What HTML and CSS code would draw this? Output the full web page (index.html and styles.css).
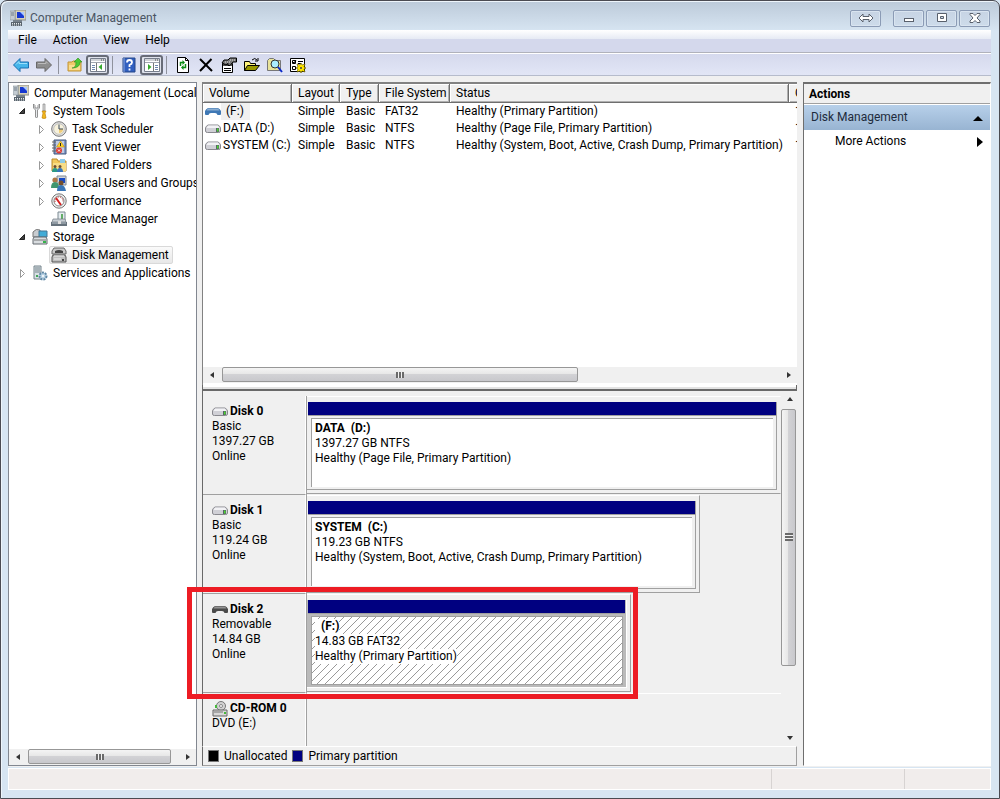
FILE: index.html
```html
<!DOCTYPE html>
<html lang="en">
<head>
  <meta charset="UTF-8">
  <meta name="viewport" content="width=device-width, initial-scale=1.0">
  <title>Computer Management</title>
  <link rel="stylesheet" href="styles.css">
</head>
<body>
  <!-- shared icons -->
  <svg class="sprite" aria-hidden="true">
    <symbol id="computer" viewBox="0 0 16 16">
      <path d="M5 0h11v10H5z" fill="#d5d1bd" stroke="#8d8d86"/>
      <path d="M7 2h7v6H7z" fill="#1738d0"/><path d="M10 2h4v4z" fill="#a9c8ff"/>
      <path d="M0 1h5v9H0z" fill="#c4ccd2" stroke="#8b949b" stroke-width=".6"/><path d="M1 3h3M1 5h3" stroke="#6e7b86"/>
      <path d="M3 10h9v2H3z" fill="#77828c"/><path d="M1 12h11v4H1z" fill="#59646d"/>
      <path d="M2 13.5h9M2 15h9" stroke="#e6eaed" stroke-dasharray="1 1"/>
    </symbol>
    <symbol id="tools" viewBox="0 0 16 16">
      <path d="M1.500 1v4l2 2v7q1 2 2 0V7l2-2V1L6 2.500V5H3V2.500z" fill="#e8ebee" stroke="#777" stroke-width=".8"/>
      <path d="M11 1h2v7h-2z" fill="#ddd" stroke="#777" stroke-width=".6"/>
      <path d="M10 8h4l-1 2 1 5q-2 1-4 0l1-5z" fill="#f2b71d" stroke="#b97900" stroke-width=".6"/>
    </symbol>
    <symbol id="clock" viewBox="0 0 16 16">
      <circle cx="8" cy="8" r="7.300" fill="#e1e1e1" stroke="#777"/><circle cx="8" cy="8" r="5.300" fill="#f7f2dc" stroke="#aaa" stroke-width=".6"/>
      <path d="M8 8h4a4 4 0 0 1-4 4z" fill="#f0ce7c"/><path d="M8 3.500V8h4" fill="none" stroke="#39485b"/>
    </symbol>
    <symbol id="event" viewBox="0 0 16 16">
      <path d="M3 1h12v14H3z" fill="#8098c5" stroke="#44587f"/><path d="M5 2h8v12H5z" fill="#bfcbe3"/>
      <path d="M1 3h4M1 6h4M1 9h4M1 12h4" stroke="#666"/>
      <path d="M9.500 2l4 6h-8z" fill="#ffd52d" stroke="#b78300" stroke-width=".5"/><path d="M9.500 4v3" stroke="#222"/>
      <circle cx="8" cy="11.500" r="3" fill="#df3c34"/><path d="M7 10.500l2 2m0-2l-2 2" stroke="#fff"/>
    </symbol>
    <symbol id="shared" viewBox="0 0 16 16">
      <path d="M1 5V2h5l1 2h8v10H1z" fill="#f2c95c" stroke="#b98a2c"/><path d="M9 2h5v4H9z" fill="#8fcbe7"/><path d="M2 6h13v8H2z" fill="#f8dd86"/>
      <circle cx="4" cy="9.500" r="1.500" fill="#6d4d32"/><circle cx="9" cy="9.500" r="1.500" fill="#6d4d32"/>
      <path d="M1 15q0-4 3-4t3 4z" fill="#2c9a86"/><path d="M6 15q0-4 3-4t3 4z" fill="#3876bb"/>
    </symbol>
    <symbol id="users" viewBox="0 0 16 16">
      <path d="M6 1h9v9H6z" fill="#d2d6dc" stroke="#818992"/><path d="M8 3h6v5H8z" fill="#174ac5"/>
      <circle cx="4" cy="5" r="2.600" fill="#ad7847"/><path d="M0 13q0-6 4-6t4 6z" fill="#40966f"/>
      <circle cx="10" cy="8" r="2.500" fill="#75502e"/><path d="M6 16q0-6 4-6t5 6z" fill="#3976b7"/>
    </symbol>
    <symbol id="gauge" viewBox="0 0 16 16">
      <circle cx="8" cy="8" r="7.200" fill="#eee" stroke="#777"/><circle cx="8" cy="8" r="5" fill="#fff" stroke="#888"/>
      <path d="M5 5l5 7" stroke="#d52020" stroke-width="2"/><path d="M4 9q0-5 4-5t4 5" fill="none" stroke="#b33" stroke-dasharray="1 1"/>
    </symbol>
    <symbol id="device" viewBox="0 0 16 16">
      <path d="M7 1h7v8H7z" fill="#e4ebef" stroke="#7d8a92"/><path d="M10 3h2v5h-2z" fill="#62ad67"/>
      <path d="M2 8h12l1 3H1z" fill="#c6cdd3" stroke="#737c84" stroke-width=".7"/><path d="M0 11h16v4H0z" fill="#66727c"/><path d="M1 12h14" stroke="#b8c2ca"/><path d="M7 10h3v3H7z" fill="#ddd"/>
    </symbol>
    <symbol id="storage" viewBox="0 0 16 16">
      <path d="M1 3q3-4 7-2v7H1z" fill="#c8ccd0" stroke="#777"/><path d="M7 2h8v6H7z" fill="#42acd7" stroke="#427796"/>
      <path d="M2 8h12l1 2v5H1v-5z" fill="#d9dde0" stroke="#656b70"/><path d="M2 11h12" stroke="#777"/><path d="M11 12h3v2h-3z" fill="#36b34b"/>
    </symbol>
    <symbol id="diskmgmt" viewBox="0 0 16 16">
      <path d="M3 1h10l2 3v3H1V4z" fill="#c9c9c9" stroke="#666"/><path d="M4 4q4-2 8 0v2H4z" fill="#444"/>
      <path d="M2 8h12l1 2v5H1v-5z" fill="#bfbfbf" stroke="#555"/><path d="M3 9h10M3 12h7" stroke="#eee"/><path d="M11 12h2v2h-2z" fill="#444"/>
    </symbol>
    <symbol id="services" viewBox="0 0 16 16">
      <path d="M2 1h7v13H2z" fill="#d9e1e5" stroke="#75838b"/><path d="M3 3h5M3 5h5M3 7h5" stroke="#75838b"/><path d="M4 10h2v2H4z" fill="#41a657"/>
      <circle cx="11" cy="11" r="3.500" fill="#b9d2e4" stroke="#6088a5" stroke-width="2" stroke-dasharray="2 1"/><circle cx="11" cy="11" r="1" fill="#fff"/>
    </symbol>
    <symbol id="drive" viewBox="0 0 16 10">
      <path d="M3 1h10q2 1 2.500 3v3q0 1.500-2 1.500h-11q-2 0-2-1.500V4Q1 2 3 1z" fill="#d0d0d6" stroke="#88888e"/><path d="M3 1.500h10l1.500 2.500h-13z" fill="#f2f2f5"/>
      <path d="M11 4h3v4h-3z" fill="#59636a"/><path d="M12 4.500h1.500v3H12z" fill="#4bd82d"/>
    </symbol>
    <symbol id="stick" viewBox="0 0 16 10">
      <path d="M3 1h10q2 1 3 3v3q0 1-1 1h-2.500Q12 6 10 6H6Q4 6 3.500 8H1Q0 8 0 7V4Q1 2 3 1z" fill="currentColor"/><path d="M3 1.500h10l1.500 2h-13z" fill="#fff" fill-opacity=".4"/>
    </symbol>
    <symbol id="open" viewBox="0 0 16 16"><path d="M5.500 10.500h5v-5z" fill="#404040" stroke="#222"/></symbol>
    <symbol id="closed" viewBox="0 0 16 16"><path d="M6.500 4.500v8l4-4z" fill="#fff" stroke="#999"/></symbol>
    <symbol id="arrow" viewBox="0 0 8 8"><path d="M2 1v6l4-3z" fill="#333"/></symbol>
  </svg>

  <div class="window">
    <header class="titlebar">
      <svg class="icon"><use href="#computer"/></svg>
      <h1>Computer Management</h1>
      <div class="caption">
        <button class="span" aria-label="Span displays"><svg width="16" height="10"><path d="M1 5l4-4v2.500h6V1l4 4-4 4V6.500H5V9z" fill="#fff" stroke="#59606c"/></svg></button>
        <button aria-label="Minimize"><svg width="12" height="12"><rect x="1.500" y="6.500" width="9" height="3" fill="#fff" stroke="#59606c"/></svg></button>
        <button aria-label="Maximize"><svg width="12" height="12"><path d="M1.500 1.500h9v8h-9zM4.500 4.500v2h3v-2z" fill="#fff" fill-rule="evenodd" stroke="#59606c"/></svg></button>
        <button aria-label="Close"><svg width="12" height="12"><path d="M1 1.500h3l2 2 2-2h3v1L8 6l3 3v1.500H8l-2-2-2 2H1V9l3-3-3-3.500z" fill="#fff" stroke="#59606c"/></svg></button>
      </div>
    </header>

    <nav class="menubar">
      <button>File</button><button>Action</button><button>View</button><button>Help</button>
    </nav>

    <div class="toolbar">
      <button aria-label="Back"><svg class="icon"><path d="M0.500 8L7 1.500V5h8.500v6H7v3.500z" fill="#45b5ea" stroke="#1b6fb0"/><path d="M3 7.500L6 4.500V6.500h8" fill="none" stroke="#9be0fb"/></svg></button>
      <button aria-label="Forward"><svg class="icon"><path d="M15.500 8L9 1.500V5H.500v6H9v3.500z" fill="#8e8e8e" stroke="#686868"/><path d="M2 6.500h8V4.500l2 2" fill="none" stroke="#bbb"/></svg></button>
      <span class="sep"></span>
      <button aria-label="Up one level"><svg class="icon"><path d="M1 14V5h4l1-1h8v10z" fill="#efc96b" stroke="#c29437"/><path d="M2 8h11v5H2z" fill="#f9dd91"/><path d="M5 11q4 0 4-6H7l4-4 4 4h-2q0 6-8 6z" fill="#4cc834" stroke="#2b8d1f" stroke-width=".6"/></svg></button>
      <button class="pressed" aria-label="Show console tree"><svg class="icon"><path d="M.500 1.500h15v13H.500z" fill="#fff" stroke="#777e8c"/><path d="M1 3h14M1 5.500h14" stroke="#a1a6b0"/><path d="M11 3h3" stroke="#444" stroke-dasharray="1 1"/><path d="M6.500 6v8" stroke="#777"/><path d="M2 8.500h3M2 10.500h3M2 12.500h3" stroke="#6e87ae"/><path d="M12 7v6L8.500 10z" fill="#37a92d"/></svg></button>
      <span class="sep"></span>
      <button aria-label="Help"><svg class="icon"><path d="M2 1h12v14H2z" fill="#315fc0" stroke="#264989"/><path d="M3 1v14" stroke="#8fa9dc"/><path d="M6 5.500q0-2.500 2.500-2.500T11 5.500Q11 7 8.500 8v2M8.500 11.500v2" fill="none" stroke="#fff" stroke-width="1.800"/></svg></button>
      <button class="pressed" aria-label="Show action pane"><svg class="icon"><path d="M.500 1.500h15v13H.500z" fill="#fff" stroke="#777e8c"/><path d="M1 3h14M1 5.500h14" stroke="#a1a6b0"/><path d="M11 3h3" stroke="#444" stroke-dasharray="1 1"/><path d="M9.500 6v8" stroke="#777"/><path d="M11 8.500h3M11 10.500h3M11 12.500h3" stroke="#6e87ae"/><path d="M4 7v6l3.500-3z" fill="#37a92d"/></svg></button>
      <span class="sep"></span>
      <button aria-label="Refresh"><svg class="icon"><path d="M2.500.500h8l3 3v12h-11z" fill="#fff" stroke="#000"/><path d="M10.500.500v3h3" fill="none" stroke="#000"/><path d="M5.500 9V5.500H8M10.500 7v3.500H8" fill="none" stroke="#0a8a14" stroke-width="1.500"/><path d="M7.500 3v5L10 5.500zM8.500 8v5L6 10.500z" fill="#0a8a14"/></svg></button>
      <button aria-label="Delete"><svg class="icon"><path d="M2 2l12 12M13.500 2L2 14" stroke="#000" stroke-width="2"/></svg></button>
      <button aria-label="Properties"><svg class="icon"><path d="M1.500 6.500h10v9h-10z" fill="#fff" stroke="#000"/><path d="M2 8h9" stroke="#555" stroke-width="2"/><path d="M3 11.500h7M3 13.500h7" stroke="#000"/><path d="M1 6l2-3h4l2-2h6.500v4H12L9 8.500H7V6.500L5 8z" fill="#777" stroke="#000"/><path d="M9 3h5M4 5h5" stroke="#ddd" stroke-dasharray="1 1"/></svg></button>
      <button aria-label="Open"><svg class="icon"><path d="M.500 13.500v-9h5l1 2h5v3" fill="#fff47c" stroke="#000"/><path d="M.500 13.500l3-5h12l-4 5z" fill="#999900" stroke="#000"/><path d="M8 3q3-3 5 0M11 4h3V1" fill="none" stroke="#000"/></svg></button>
      <button aria-label="Find"><svg class="icon"><path d="M.500 13.500v-10l2-2h4l2 2h5v10z" fill="#e8e39a" stroke="#777"/><circle cx="8" cy="7" r="4" fill="#a9edff" stroke="#333"/><path d="M11 10l4 5" stroke="#0827c7" stroke-width="2"/></svg></button>
      <button aria-label="Settings"><svg class="icon"><path d="M.500 1.500h14v13H.500z" fill="#fff" stroke="#000"/><path d="M2.500 3.500h3v3h-3zM2.500 9.500h3v3h-3z" fill="#fff" stroke="#000"/><path d="M3 5l1 1 2-3M8 4.500h5M8 6.500h3" fill="none" stroke="#000"/><path d="M11 6l1 2 3-1-1 3 2 1-2 1 1 3-3-1-1 2-1-2-3 1 1-3-2-1 2-1-1-3 3 1z" fill="#ffe500" stroke="#554b00" stroke-width=".6"/><circle cx="11" cy="11" r="1" fill="#444"/></svg></button>
    </div>

    <main class="panes">
      <section class="tree-pane">
        <ul class="tree">
          <li>
            <div class="node root"><svg class="icon"><use href="#computer"/></svg><span>Computer Management (Local</span></div>
            <ul>
              <li>
                <div class="node"><svg class="twisty"><use href="#open"/></svg><svg class="icon"><use href="#tools"/></svg><span>System Tools</span></div>
                <ul>
                  <li><div class="node"><svg class="twisty"><use href="#closed"/></svg><svg class="icon"><use href="#clock"/></svg><span>Task Scheduler</span></div></li>
                  <li><div class="node"><svg class="twisty"><use href="#closed"/></svg><svg class="icon"><use href="#event"/></svg><span>Event Viewer</span></div></li>
                  <li><div class="node"><svg class="twisty"><use href="#closed"/></svg><svg class="icon"><use href="#shared"/></svg><span>Shared Folders</span></div></li>
                  <li><div class="node"><svg class="twisty"><use href="#closed"/></svg><svg class="icon"><use href="#users"/></svg><span>Local Users and Groups</span></div></li>
                  <li><div class="node"><svg class="twisty"><use href="#closed"/></svg><svg class="icon"><use href="#gauge"/></svg><span>Performance</span></div></li>
                  <li><div class="node"><svg class="twisty"></svg><svg class="icon"><use href="#device"/></svg><span>Device Manager</span></div></li>
                </ul>
              </li>
              <li>
                <div class="node"><svg class="twisty"><use href="#open"/></svg><svg class="icon"><use href="#storage"/></svg><span>Storage</span></div>
                <ul>
                  <li><div class="node"><svg class="twisty"></svg><div class="selected"><svg class="icon"><use href="#diskmgmt"/></svg><span>Disk Management</span></div></div></li>
                </ul>
              </li>
              <li><div class="node"><svg class="twisty"><use href="#closed"/></svg><svg class="icon"><use href="#services"/></svg><span>Services and Applications</span></div></li>
            </ul>
          </li>
        </ul>
        <div class="scroll horizontal">
          <button class="left" aria-label="Scroll left"><svg><use href="#arrow"/></svg></button>
          <div class="track"><div class="thumb wide"><i class="grip"></i></div></div>
          <button class="right" aria-label="Scroll right"><svg><use href="#arrow"/></svg></button>
        </div>
      </section>

      <section class="middle">
        <div class="volumes">
          <div class="table-wrap">
            <table>
              <colgroup><col class="c-volume"><col class="c-layout"><col class="c-type"><col class="c-fs"><col class="c-status"><col class="c-capacity"></colgroup>
              <thead>
                <tr><th>Volume</th><th>Layout</th><th>Type</th><th>File System</th><th>Status</th><th>Capacity</th></tr>
              </thead>
              <tbody>
                <tr><td><div class="vol"><svg class="drive usb"><use href="#stick"/></svg><span class="focus">(F:)</span></div></td><td>Simple</td><td>Basic</td><td>FAT32</td><td>Healthy (Primary Partition)</td><td>14.83 GB</td></tr>
                <tr><td><div class="vol"><svg class="drive"><use href="#drive"/></svg><span>DATA (D:)</span></div></td><td>Simple</td><td>Basic</td><td>NTFS</td><td>Healthy (Page File, Primary Partition)</td><td>1397.27 GB</td></tr>
                <tr><td><div class="vol"><svg class="drive"><use href="#drive"/></svg><span>SYSTEM (C:)</span></div></td><td>Simple</td><td>Basic</td><td>NTFS</td><td>Healthy (System, Boot, Active, Crash Dump, Primary Partition)</td><td>119.23 GB</td></tr>
              </tbody>
            </table>
          </div>
          <div class="scroll horizontal">
            <button class="left" aria-label="Scroll left"><svg><use href="#arrow"/></svg></button>
            <div class="track"><div class="thumb half"><i class="grip"></i></div></div>
            <button class="right" aria-label="Scroll right"><svg><use href="#arrow"/></svg></button>
          </div>
        </div>
        <div class="splitter"></div>

        <div class="graph">
          <div class="disks">
            <div class="disk">
              <div class="info"><b><svg class="drive"><use href="#drive"/></svg>Disk 0</b>Basic<br>1397.27 GB<br>Online</div>
              <div class="lane">
                <div class="extent full" style="width: 100%">
                  <div class="partition"><div class="bar"></div><div class="volume"><b>DATA&nbsp; (D:)</b><span>1397.27 GB NTFS</span><span>Healthy (Page File, Primary Partition)</span></div></div>
                </div>
              </div>
            </div>
            <div class="disk">
              <div class="info"><b><svg class="drive"><use href="#drive"/></svg>Disk 1</b>Basic<br>119.24 GB<br>Online</div>
              <div class="lane">
                <div class="extent" style="width: 83%">
                  <div class="partition"><div class="bar"></div><div class="volume"><b>SYSTEM&nbsp; (C:)</b><span>119.23 GB NTFS</span><span>Healthy (System, Boot, Active, Crash Dump, Primary Partition)</span></div></div>
                </div>
              </div>
            </div>
            <div class="disk">
              <div class="info"><b><svg class="drive removable"><use href="#stick"/></svg>Disk 2</b>Removable<br>14.84 GB<br>Online</div>
              <div class="lane">
                <div class="extent" style="width: 68.3%">
                  <div class="partition active"><div class="bar"></div><div class="volume"><b>&nbsp; (F:)</b><span>14.83 GB FAT32</span><span>Healthy (Primary Partition)</span></div></div>
                  <div class="highlight"></div>
                </div>
              </div>
            </div>
            <div class="disk last">
              <div class="info"><b><svg class="drive cd" viewBox="0 0 16 16"><circle cx="9" cy="5" r="4.500" fill="#d2d2d2" stroke="#777"/><circle cx="9" cy="5" r="1.500" fill="#fff" stroke="#888"/><path d="M1 9h14v6H1z" fill="#d8d8d8" stroke="#666"/><path d="M2 11h9" stroke="#777"/><path d="M12 11h2v2h-2zM3 4h2v3H3z" fill="#46b83c"/></svg>CD-ROM 0</b>DVD (E:)</div>
              <div class="lane"></div>
            </div>
          </div>
          <div class="scroll vertical">
            <button class="up" aria-label="Scroll up"><svg><use href="#arrow"/></svg></button>
            <div class="track"><div class="thumb tall"><i class="grip"></i></div></div>
            <button class="down" aria-label="Scroll down"><svg><use href="#arrow"/></svg></button>
          </div>
        </div>
        <div class="legend">
          <i class="swatch"></i><span>Unallocated</span><i class="swatch primary"></i><span>Primary partition</span>
        </div>
      </section>

      <aside class="actions">
        <h2>Actions</h2>
        <button class="section">Disk Management<svg width="10" height="6"><path d="M0 6l5-5 5 5z"/></svg></button>
        <button class="more">More Actions<svg width="6" height="10"><path d="M0 0v10l6-5z"/></svg></button>
      </aside>
    </main>

    <footer class="status"><span></span><span></span><span></span></footer>
  </div>
</body>
</html>
```

FILE: styles.css
```css
* { box-sizing: border-box; }
body { margin: 0; background: #d7e5f2; font: 12px/15px Roboto, "Open Sans", sans-serif; color: #000; }
button { margin: 0; padding: 0; border: 0; background: none; font: inherit; color: inherit; }
h1, h2 { margin: 0; font-size: 12px; }
ul { list-style: none; margin: 0; padding: 0; }
svg { display: block; flex: none; }
.sprite { position: absolute; width: 0; height: 0; }
.icon { width: 16px; height: 16px; }

.window { height: 100vh; display: flex; flex-direction: column; padding: 0 8px 8px 7px; border: 1px solid #4b4b52; border-radius: 7px 7px 0 0; background: linear-gradient(#bccad9, #d7e5f2 30px); box-shadow: inset 1px 1px #eef5fb; }

/* title bar */
.titlebar { display: flex; align-items: center; flex: none; height: 29px; padding: 5px 1px 0 2px; gap: 4px; }
.titlebar h1 { flex: 1; font-weight: normal; color: #4a5563; }
.caption { display: flex; gap: 2px; }
.caption button { width: 31px; height: 17px; display: grid; place-items: center; border: 1px solid #8b9bb5; border-radius: 2px; background: linear-gradient(#c7d4e4, #cddbea); box-shadow: inset 0 0 0 1px #d9e4f0; }
.caption .span { margin-right: 10px; }

/* menu and toolbar */
.menubar { display: flex; flex: none; height: 23px; padding: 0 2px 1px; border-bottom: 1px solid #b0b2bb; background: linear-gradient(#fff, #e6eaf4 9px, #d4d8ec 9px); }
.menubar button { padding: 0 8px; }
.toolbar { display: flex; align-items: center; flex: none; height: 23px; padding-left: 1px; border-top: 1px solid #fff; border-bottom: 1px solid #b6bccc; background: linear-gradient(#d5d9ed, #e2e6f6); }
.toolbar button { width: 23px; height: 20px; display: grid; place-items: center; }
.toolbar .pressed { border: 2px solid #686c78; border-radius: 3px; background: #dfe2ec; }
.sep { width: 8px; height: 18px; background: linear-gradient(#8f929d, #8f929d) 3px 0 / 1px 100% no-repeat; }

.panes { flex: 1; min-height: 0; display: grid; grid-template-columns: 189px minmax(0, 1fr) 188px; gap: 5px; padding: 6px 0 1px; background: #f0f0f0; }

/* console tree */
.tree-pane { display: flex; flex-direction: column; min-height: 0; overflow: hidden; border: 1px solid #828790; background: #fff; }
.tree { flex: 1; padding-top: 1px; }
.tree ul ul { padding-left: 19px; }
.node { display: flex; align-items: center; height: 18px; padding-left: 5px; white-space: nowrap; }
.node .icon { margin-right: 5px; }
.root { padding-left: 4px; }
.twisty { width: 16px; height: 16px; margin-right: 2px; }
.selected { display: flex; align-items: center; height: 18px; margin-left: -2px; padding: 0 3px 0 1px; border: 1px solid #d9d9d9; border-radius: 2px; background: linear-gradient(#fafafa, #e8e8e8); }

/* scroll bars */
.scroll { display: flex; flex: none; background: #f0f0f0; }
.scroll button { width: 17px; height: 16px; display: grid; place-items: center; }
.scroll svg { width: 8px; height: 8px; }
.left svg { transform: rotate(180deg); }
.up svg { transform: rotate(-90deg); }
.down svg { transform: rotate(90deg); }
.track { flex: 1; padding: 0 2px; }
.thumb { display: grid; place-items: center; height: 15px; border: 1px solid #979797; border-radius: 2px; background: linear-gradient(#f4f4f4, #e6e6e6 50%, #d2d2d5 50%, #c8c8cc); }
.grip { width: 8px; height: 6px; background: repeating-linear-gradient(90deg, #6a6a6a 0 2px, #f2f2f2 2px 3px); }
.wide { width: 96%; }
.half { width: 64%; }
.vertical { flex-direction: column; width: 16px; }
.vertical .track { padding: 2px 0 0; }
.vertical .thumb { width: 15px; background: linear-gradient(90deg, #f4f4f4, #e6e6e6 50%, #d2d2d5 50%, #c8c8cc); }
.vertical .grip { width: 8px; height: 8px; background: repeating-linear-gradient(#6a6a6a 0 2px, #f2f2f2 2px 3px); }
.vertical .tall { height: 80%; }

/* volume list */
.middle { display: flex; flex-direction: column; min-height: 0; padding-right: 1px; }
.volumes { flex: none; height: 303px; display: flex; flex-direction: column; padding-bottom: 2px; border: 1px solid #828282; border-width: 2px 0 0 1px; background: #fff; }
.table-wrap { flex: 1; overflow: hidden; }
table { width: 665px; table-layout: fixed; border-collapse: separate; border-spacing: 0; }
th { height: 19px; padding: 0 6px; border-right: 1px solid #6e6e6e; border-bottom: 1px solid #6e6e6e; background: #f0f0f0; box-shadow: inset 1px 1px #fff, inset -1px -1px #b0b0b0; font-weight: normal; text-align: left; white-space: nowrap; }
td { height: 17px; padding: 0 0 0 6px; line-height: 17px; white-space: nowrap; }
td:first-child { padding-left: 2px; }
.c-volume { width: 89px; }
.c-layout { width: 48px; }
.c-type { width: 39px; }
.c-fs { width: 71px; }
.c-status { width: 339px; }
.c-capacity { width: 79px; }
.vol { display: flex; align-items: center; gap: 2px; }
.drive { width: 16px; height: 10px; }
.usb { color: #3f78b5; }
.removable { color: #4b4b4b; }
.focus { margin-left: -2px; padding: 0 6px 0 5px; background: #f0f0f0; }
.splitter { flex: none; height: 6px; border: solid #696969; border-width: 0 1px 2px 1px; background: linear-gradient(#fff 2px, #e3e3e3 2px); }

/* graphical view */
.graph { flex: 1; min-height: 0; display: flex; border-left: 1px solid #696969; }
.disks { flex: 1; min-width: 0; display: flex; flex-direction: column; padding-top: 5px; }
.disk { display: flex; flex: none; height: 99px; }
.disk.last { flex: 1; min-height: 0; }
.info { width: 103px; padding: 8px 0 0 9px; border-right: 1px solid #fff; border-bottom: 1px solid #a0a0a0; }
.info b { display: flex; align-items: center; height: 15px; gap: 2px; white-space: nowrap; }
.last .info { border-bottom: 0; }
.cd { height: 16px; }
.lane { flex: 1; min-width: 0; border-left: 1px solid #a0a0a0; }
.last .lane { border-top: 1px solid #fff; }
.extent { position: relative; height: 98px; padding: 5px 3px 3px 0; border: 1px solid #a0a0a0; border-width: 1px 1px 1px 0; border-top-color: #fff; }
.full { border-right-color: transparent; }
.partition { display: flex; flex-direction: column; height: 100%; padding-left: 1px; border: 1px solid #a0a0a0; border-width: 0 1px 1px 0; }
.bar { height: 14px; background: #000080; border-bottom: 1px solid #a0a0a0; }
.volume { flex: 1; display: flex; flex-direction: column; align-items: flex-start; margin: 2px 3px 2px 3px; padding: 2px 3px; border: 1px solid #a0a0a0; border-width: 1px 0 0 1px; background: #fff; white-space: nowrap; }
.volume b, .volume span { background: #fff; }
.active { background: #bababa; border-color: #fff; }
.active .bar { margin-right: 1px; }
.active .volume { border-width: 1px; background: linear-gradient(135deg, transparent 45%, #999 45%, #999 55%, transparent 55%) 0 0 / 8px 8px #fff; }

/* red frame round the removable disk */
.highlight { position: absolute; top: -8px; right: -8px; bottom: -8px; left: -120px; border: 5px solid #ed1c24; }

.legend { flex: none; display: flex; align-items: center; gap: 5px; height: 20px; padding-left: 5px; border: 1px solid #a0a0a0; border-left-color: #696969; border-top-color: #fff; }
.swatch { width: 11px; height: 12px; border: 1px solid #777; background: #000; }
.swatch.primary { background: #000080; }

/* actions pane */
.actions { border: 2px solid #6e6e6e; border-width: 2px 1px 1px 1px; border-right-color: #fff; border-bottom-color: #fff; background: #fff; }
.actions h2 { height: 20px; padding: 3px 5px; border-bottom: 1px solid #a0a0a0; background: #f0f0f0; }
.actions button { display: flex; align-items: center; justify-content: space-between; width: 100%; }
.actions .section { height: 25px; margin-top: 1px; padding: 0 7px; background: linear-gradient(#b7d0ea, #98b4d2); color: #1e2b3c; }
.actions .more { height: 23px; padding: 0 7px 0 31px; }

.status { flex: none; height: 22px; display: grid; grid-template-columns: 1fr 133px 86px; margin-top: 1px; border: 1px solid #fff; background: #f1edec; }
.status span + span { border-left: 1px solid #d7d3d2; }
```
